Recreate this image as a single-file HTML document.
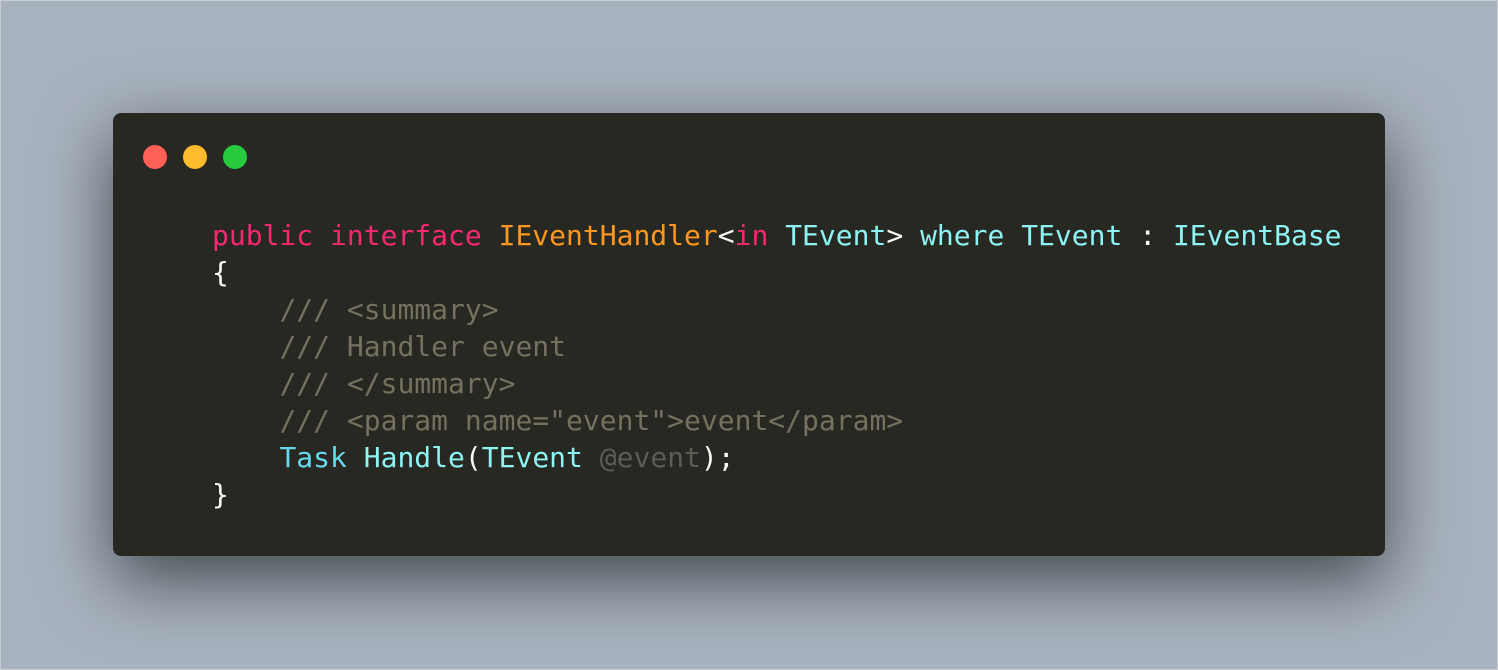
<!DOCTYPE html>
<html><head><meta charset="utf-8"><style>
html,body{margin:0;padding:0;}
body{width:1498px;height:670px;background:#a8b2be;position:relative;overflow:hidden;box-sizing:border-box;border:1px solid #c9ced4;}
.win{position:absolute;left:112px;top:112px;width:1272px;height:443px;background:#272822;border-radius:8px;box-shadow:0 24px 70px rgba(0,0,0,0.6);}
.dot{position:absolute;top:32px;width:24px;height:24px;border-radius:50%;}
pre{position:absolute;left:99px;top:104px;margin:0;font-family:"DejaVu Sans Mono","Liberation Mono",monospace;font-size:28px;line-height:37px;color:#f8f8f2;}
.k{color:#f92672}.o{color:#fd971f}.c{color:#8ef3f3}.t{color:#66d9ef}.m{color:#75715e}.g{color:#5c5c55}
</style></head><body>
<div class="win">
<div class="dot" style="left:30px;background:#ff5f56"></div>
<div class="dot" style="left:70px;background:#ffbd2e"></div>
<div class="dot" style="left:110px;background:#27c93f"></div>
<pre><span class="k">public</span> <span class="k">interface</span> <span class="o">IEventHandler</span>&lt;<span class="k">in</span> <span class="c">TEvent</span>&gt; <span class="c">where</span> <span class="c">TEvent</span> : <span class="c">IEventBase</span>
{
    <span class="m">/// &lt;summary&gt;</span>
    <span class="m">/// Handler event</span>
    <span class="m">/// &lt;/summary&gt;</span>
    <span class="m">/// &lt;param name="event"&gt;event&lt;/param&gt;</span>
    <span class="t">Task</span> <span class="c">Handle</span>(<span class="c">TEvent</span> <span class="g">@event</span>);
}</pre>
</div>
</body></html>
